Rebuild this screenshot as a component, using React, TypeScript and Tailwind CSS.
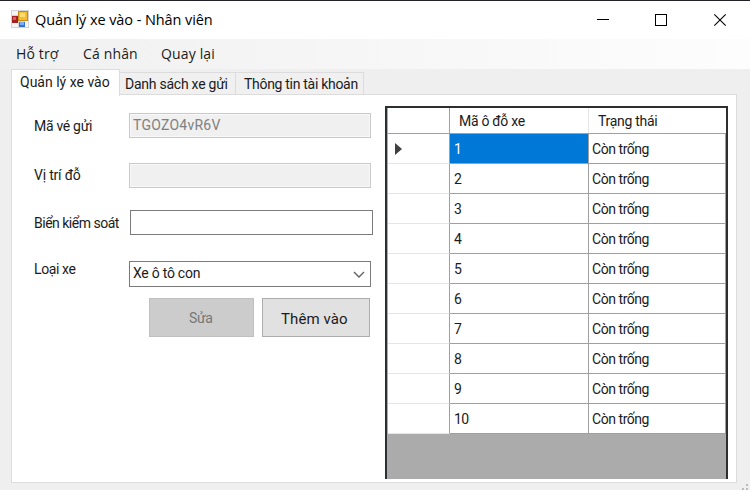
import type { ReactNode } from 'react';

const slots = ['1', '2', '3', '4', '5', '6', '7', '8', '9', '10'];

function Label({ className, children }: { className: string; children: ReactNode }) {
  return <span className={'block whitespace-nowrap leading-[20px] ' + className}>{children}</span>;
}

function AppIcon() {
  return (
    <svg width="18" height="18" viewBox="0 0 18 18" className="block" shapeRendering="crispEdges">
      <rect width="18" height="18" fill="#d4d4d6" />
      <rect x="1" y="1" width="6" height="4" fill="#f4f4f4" />
      <rect x="1" y="13" width="6" height="4" fill="#f4f4f4" />
      <rect x="14" y="11" width="3" height="6" fill="#f4f4f4" />
      <rect x="1" y="6" width="6" height="7" fill="#a52020" />
      <rect x="2" y="7" width="3" height="3" fill="#d96060" />
      <rect x="7" y="1" width="10" height="10" fill="#c58d13" />
      <rect x="8" y="2" width="8" height="8" fill="#f2bd2e" />
      <rect x="9" y="3" width="5" height="4" fill="#ffdc78" />
      <rect x="8" y="12" width="6" height="5" fill="#3771d4" />
      <rect x="9" y="12" width="4" height="3" fill="#7faaf4" />
    </svg>
  );
}

function TitleBar() {
  return (
    <header className="flex h-[39px] border-t border-[#22202a] bg-white pl-[11px]">
      <div className="pt-[9px]">
        <AppIcon />
      </div>
      <Label className="ml-[6px] mt-[9px] font-['Open_Sans',sans-serif] text-[14.5px] tracking-[-0.08px] text-black">
        Quản lý xe vào - Nhân viên
      </Label>
      <svg className="ml-auto mr-[23px] mt-[12px] block" width="131" height="14" viewBox="0 0 131 14" fill="none" stroke="#000">
        <path d="M1 6.5H13" />
        <rect x="59.5" y="1.5" width="11" height="11" />
        <path d="M118.3 1.3L129.7 12.7M129.7 1.3L118.3 12.7" strokeWidth="1.1" />
      </svg>
    </header>
  );
}

function MenuBar() {
  return (
    <nav className="flex h-[30px] bg-linear-to-r from-[#f0f0f0] to-[#fdfdfd] pl-[16px] pt-[5px] font-['Open_Sans',sans-serif] text-[14px] text-[#1b1b1b]">
      <Label className="w-[67px] tracking-[0.15px]">Hỗ trợ</Label>
      <Label className="w-[78px] tracking-[0.15px]">Cá nhân</Label>
      <Label className="tracking-[0.15px]">Quay lại</Label>
    </nav>
  );
}

function Tabs() {
  return (
    <div className="flex h-[26px] items-end pl-[11px] text-[#1b1b1b]">
      <div className="z-10 -mb-px h-[27px] w-[109px] border border-b-0 border-[#dcdcdc] bg-white pl-[8px] pt-[2px]">
        <Label className="tracking-[0px]">Quản lý xe vào</Label>
      </div>
      <div className="h-[23px] w-[116px] border-r border-t border-[#dcdcdc] bg-[#f0f0f0] pl-[5px] pt-px">
        <Label className="tracking-[-0.25px]">Danh sách xe gửi</Label>
      </div>
      <div className="h-[23px] w-[128px] border-r border-t border-[#dcdcdc] bg-[#f0f0f0] pl-[8px] pt-px">
        <Label className="tracking-[-0.3px]">Thông tin tài khoản</Label>
      </div>
    </div>
  );
}

function EntryForm() {
  return (
    <div className="w-[373px] shrink-0 pl-[22px] pt-[18px]">
      <div className="flex h-[50px]">
        <Label className="mt-[3px] w-[95px] tracking-[-0.3px]">Mã vé gửi</Label>
        <div className="h-[25px] w-[242px] border border-[#c9c9c9] bg-[#f0f0f0] pl-[3px] pt-px shadow-[inset_0_0_0_1px_#f8f8f8]">
          <Label className="tracking-[0.25px] text-[#808080]">TGOZO4vR6V</Label>
        </div>
      </div>
      <div className="flex h-[47px]">
        <Label className="mt-[2px] w-[95px] tracking-[-0.2px]">Vị trí đỗ</Label>
        <div className="h-[25px] w-[242px] border border-[#c9c9c9] bg-[#f0f0f0] shadow-[inset_0_0_0_1px_#f8f8f8]" />
      </div>
      <div className="flex h-[51px]">
        <Label className="mt-[3px] w-[96px] tracking-[-0.5px]">Biển kiểm soát</Label>
        <div className="h-[25px] w-[243px] border border-[#7a7a7a] bg-white" />
      </div>
      <div className="flex h-[37px]">
        <Label className="-mt-[2px] w-[95px] tracking-[-0.4px]">Loại xe</Label>
        <div className="flex h-[26px] w-[242px] justify-between border border-[#7a7a7a] bg-white pl-[3px] pr-[5px] pt-px">
          <Label className="tracking-[-0.25px]">Xe ô tô con</Label>
          <svg className="mt-[8px] block" width="12" height="8" viewBox="0 0 12 8" fill="none" stroke="#606060" strokeWidth="1.4">
            <path d="M1 1L6 6L11 1" />
          </svg>
        </div>
      </div>
      <div className="flex gap-[8px] pl-[115px]">
        <div className="h-[39px] w-[105px] border border-[#bfbfbf] bg-[#cccccc] pt-[9px] pl-[39px]">
          <Label className="tracking-[-0.4px] text-[#777777]">Sửa</Label>
        </div>
        <div className="h-[39px] w-[108px] border border-[#adadad] bg-[#e1e1e1] pt-[10px] pl-[18px]">
          <Label className="text-[15px] tracking-[0.1px]">Thêm vào</Label>
        </div>
      </div>
    </div>
  );
}

function SlotGrid() {
  return (
    <div className="mt-[11px] h-[373px] w-[343px] border-x-2 border-t-2 border-[#2c2e2f] bg-[#ababab] pl-px">
      <div className="flex h-[26px] border-b border-[#a0a0a0] bg-white">
        <div className="w-[62px] border-r border-[#a0a0a0]" />
        <div className="w-[139px] border-r border-[#e5e5e5] pl-[9px] pt-[3px]">
          <Label className="tracking-[-0.3px]">Mã ô đỗ xe</Label>
        </div>
        <div className="pl-[9px] pt-[3px]">
          <Label className="tracking-[-0.3px]">Trạng thái</Label>
        </div>
      </div>
      {slots.map((slot, i) => (
        <div key={slot} className="flex h-[30px] bg-white">
          <div className="w-[62px] border-b border-r border-b-[#e5e5e5] border-r-[#a0a0a0] pl-[7px] pt-[9px]">
            {i === 0 && (
              <svg width="7" height="12" viewBox="0 0 7 12" className="block">
                <path d="M0 0L7 6L0 12Z" fill="#404040" />
              </svg>
            )}
          </div>
          <div
            className={
              'w-[139px] border-b border-r border-[#a0a0a0] pl-[4px] pt-[5px] ' + (i === 0 ? 'bg-[#0078d7] text-white' : 'bg-white')
            }
          >
            <Label className="tracking-[-0.6px]">{slot}</Label>
          </div>
          <div className="flex-1 border-b border-r border-[#a0a0a0] pl-[3px] pt-[5px]">
            <Label className="tracking-[-0.45px]">Còn trống</Label>
          </div>
        </div>
      ))}
    </div>
  );
}

export default function App() {
  return (
    <div className="flex h-[490px] w-[750px] flex-col overflow-hidden bg-[#efefef] font-[Roboto,sans-serif] text-[14px] text-[#1b1b1b]">
      <TitleBar />
      <MenuBar />
      <Tabs />
      <main className="ml-[11px] -mt-px flex h-[389px] w-[726px] border border-[#dcdcdc] bg-white">
        <EntryForm />
        <SlotGrid />
      </main>
      <svg className="ml-auto mt-auto block" width="8" height="7" viewBox="0 0 8 7" fill="#bcbcbc">
        <rect x="4" y="1" width="2" height="2" />
        <rect x="0" y="5" width="2" height="2" />
        <rect x="4" y="5" width="2" height="2" />
      </svg>
    </div>
  );
}
